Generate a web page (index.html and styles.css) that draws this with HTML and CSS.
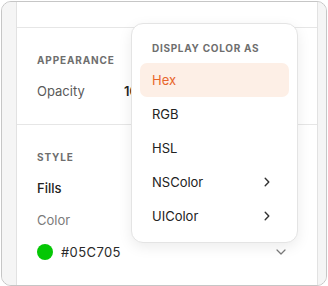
FILE: index.html
```html
<!DOCTYPE html>
<html>
<head>
<meta charset="utf-8">
<link rel="stylesheet" href="styles.css">
</head>
<body>
<div class="frame">
  <div class="gutter gutter-left"></div>
  <div class="panel">
    <div class="section section-top"></div>
    <div class="section section-appearance">
      <div class="label-caps">Appearance</div>
      <div class="row">
        <span class="row-label">Opacity</span>
        <span class="row-value">100%</span>
      </div>
    </div>
    <div class="section section-style">
      <div class="label-caps">Style</div>
      <div class="row row-strong">Fills</div>
      <div class="row row-muted">Color</div>
      <div class="row swatch-row">
        <span class="swatch"></span>
        <span class="swatch-text">#05C705</span>
        <svg class="chev-down" width="10" height="6" viewBox="0 0 10 6"><path d="M1 1l4 4 4-4" fill="none" stroke="#7a7a7a" stroke-width="1.2" stroke-linecap="round" stroke-linejoin="round"/></svg>
      </div>
    </div>
  </div>
  <div class="gutter gutter-right"></div>

  <div class="menu">
    <div class="menu-header">Display color as</div>
    <div class="menu-item active">Hex</div>
    <div class="menu-item">RGB</div>
    <div class="menu-item">HSL</div>
    <div class="menu-item">NSColor
      <svg class="chev-right" width="6" height="10" viewBox="0 0 6 10"><path d="M1.2 1.2l3.6 3.8-3.6 3.8" fill="none" stroke="#333" stroke-width="1.4" stroke-linecap="round" stroke-linejoin="round"/></svg>
    </div>
    <div class="menu-item">UIColor
      <svg class="chev-right" width="6" height="10" viewBox="0 0 6 10"><path d="M1.2 1.2l3.6 3.8-3.6 3.8" fill="none" stroke="#333" stroke-width="1.4" stroke-linecap="round" stroke-linejoin="round"/></svg>
    </div>
  </div>
</div>
</body>
</html>
```
FILE: styles.css
```css
* { box-sizing: border-box; }
html, body { margin: 0; padding: 0; background: #ffffff; }
body {
  font-family: Inter, "Liberation Sans", sans-serif;
  width: 328px;
  height: 286px;
  overflow: hidden;
}
.frame {
  position: relative;
  margin: 1px 1px 0 1px;
  width: 326px;
  height: 285px;
  border: 1px solid #c6c6c6;
  border-radius: 10px;
  overflow: hidden;
  display: flex;
  background: #f5f5f5;
}
.gutter { background: #f5f5f5; }
.gutter-left { width: 15px; border-right: 1px solid #e2e2e2; }
.gutter-right { flex: 1; border-left: 1px solid #e2e2e2; }
.panel {
  width: 300px;
  background: #ffffff;
  display: flex;
  flex-direction: column;
}
.section { border-bottom: 1px solid #e6e6e6; padding: 0 20px; }
.section-top { height: 26px; }
.section-appearance { height: 97px; padding-top: 23px; }
.section-style { flex: 1; border-bottom: none; padding-top: 23px; }
.label-caps {
  height: 18px;
  display: flex;
  align-items: center;
  font-size: 10px;
  font-weight: 700;
  letter-spacing: 0.085em;
  text-transform: uppercase;
  color: #6e6e6e;
}
.row {
  height: 20px;
  margin-top: 12px;
  display: flex;
  align-items: center;
  font-size: 13px;
  color: #5a5a5a;
}
.row-label { width: 87px; }
.row-value { color: #1f1f1f; font-weight: 600; }
.row-strong { color: #222; font-weight: 500; }
.row-muted { color: #7a7a7a; }
.swatch-row { color: #2a2a2a; }
.swatch-text { letter-spacing: 0.03em; }
.swatch {
  width: 16px;
  height: 16px;
  border-radius: 50%;
  background: #05C705;
  margin-right: 8px;
}
.chev-down { margin-left: auto; margin-right: 11px; }

.menu {
  position: absolute;
  left: 129px;
  top: 21px;
  width: 167px;
  height: 220px;
  background: #ffffff;
  border: 1px solid #e4e4e4;
  border-radius: 12px;
  box-shadow: 0 4px 14px rgba(0, 0, 0, 0.08);
  padding: 8px;
}
.menu-header {
  height: 31px;
  display: flex;
  align-items: center;
  padding-left: 12px;
  font-size: 10px;
  font-weight: 700;
  letter-spacing: 0.07em;
  text-transform: uppercase;
  color: #6e6e6e;
}
.menu-item {
  height: 34px;
  display: flex;
  align-items: center;
  padding: 0 12px;
  font-size: 13px;
  color: #222;
  border-radius: 7px;
}
.menu-item.active { background: #fdefe6; color: #e8652c; }
.chev-right { margin-left: auto; margin-right: 7px; }
```
